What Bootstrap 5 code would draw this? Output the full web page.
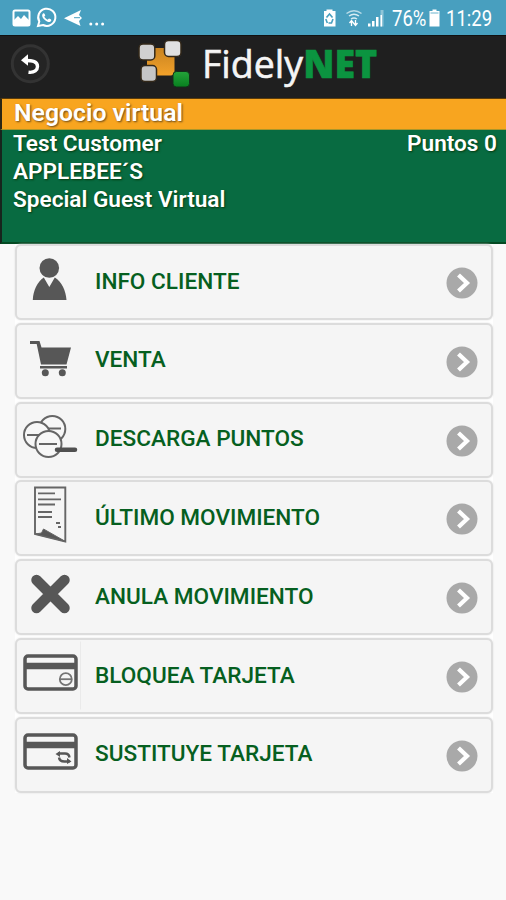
<!DOCTYPE html>
<html lang="es">
<head>
<meta charset="utf-8">
<meta name="viewport" content="width=device-width, initial-scale=1">
<title>FidelyNET</title>
<link href="https://cdn.jsdelivr.net/npm/bootstrap@5.3.0/dist/css/bootstrap.min.css" rel="stylesheet">
<style>
body{background:#f9f9f9;font-family:Roboto,"Liberation Sans",sans-serif;min-height:900px;overflow:hidden}
.status{height:35px;background:#489fbf;color:#fff;font-size:21.5px;line-height:35px}
.status svg,.topbar svg,.menu svg{display:block;flex:none}
.pct{width:35px;padding-top:1px;padding-left:1px}
.clock{width:52px;padding-top:1px}
.fit{display:inline-block;transform-origin:0 50%;white-space:nowrap}
.status .fit{transform:scaleX(.86)}
.brand .fit{transform:scaleX(.962);-webkit-text-stroke:.6px #f5f5f5}
.brand .fit b{-webkit-text-stroke:.6px #0b9440}
.topbar{height:63px;background:#1f1f1f;border-top:1px solid #111}
.brand{font-family:"Open Sans","Noto Sans",sans-serif;font-size:39px;line-height:53px;color:#f5f5f5;font-weight:500;white-space:nowrap}
.brand b{color:#0b9440;font-weight:800}
.shop{height:32px;background:#f8a51f;border-left:2px solid #2b2715;border-top:1px solid #5b3c0a;border-bottom:1px solid #a9962a;font-size:24.8px;line-height:28px;font-weight:600;color:#fff;text-shadow:1px 1px 2px #6b4a1a;padding-left:12px}
.customer{height:114px;background:#086b41;border-left:2px solid #17251d;border-bottom:2px solid #044a22;color:#fff;font-size:22.6px;line-height:28.100px;font-weight:600;text-shadow:1px 1px 2px #073c0f;padding:0 9px 0 11px}
.menu{width:478px;margin-left:15px;gap:2.8px;background:#fff}
.entry{height:76px;background:#f5f5f5;border:2px solid #dcdcdc;border-radius:6px;color:#065f20;font-size:22.6px;font-weight:500;text-decoration:none;box-shadow:0 0 2px #ddd}
.entry:hover{color:#065f20}
.entry .label{margin-left:8px;margin-top:-1px}
.entry .go{margin-right:13px;margin-top:2px}
</style>
</head>
<body>
<header>
<div class="status d-flex align-items-stretch">
<svg width="110" height="35" viewBox="0 0 110 35" aria-hidden="true"><rect x="13.500" y="10.500" width="16" height="15" rx="1.500" fill="none" stroke="#fff" stroke-width="2"/><path d="M14 20l4-4 3 3 3-4 5 5v5H14z" fill="#fff"/><path d="M38 26l1.300-4.500A8.600 8.600 0 1 1 43 25z" fill="none" stroke="#fff" stroke-width="2"/><path d="M43 13.500c-2 2 0 5 2.200 6.800 2.300 2 4.800 2.500 6 .5.500-1-.2-1.400-2.200-2.300l-1.500 1.300c-1.600-.7-2.700-1.900-3.200-3.200l1-1.200c-.8-1.900-1.300-2.800-2.300-1.900z" fill="#fff"/><path d="M64 18.300 81 10l-2 5 3 3-3 3 1.500 5z" fill="#fff"/><path d="M74 17.700h6" stroke="#489fbf" stroke-width="1"/><circle cx="90.800" cy="24" r="1.500" fill="#fff"/><circle cx="96.700" cy="24" r="1.500" fill="#fff"/><circle cx="102.600" cy="24" r="1.500" fill="#fff"/></svg>
<svg class="ms-auto" width="70" height="35" viewBox="321 0 70 35" aria-hidden="true"><path d="M324 11h2.500V9.500h6V11h3v15.500H324V11z" fill="#fff"/><path d="M326.500 17.500l3-3.500 3 3.500M333 19l-1.500 4h-3M325.800 19l1.500 4" fill="none" stroke="#489fbf" stroke-width="1.600"/><path d="M346.500 13.500q7.500-5.500 15 0" fill="none" stroke="#b9dce8" stroke-width="1.500"/><path d="M349 16q5-3.500 10 0M351 19q3-2 6 0" fill="none" stroke="#d8edf3" stroke-width="1.500"/><path d="M351.500 26v-5M349.500 23l2-2.500 2 2.500M355.500 20v5.500M353.500 23l2 2.500 2-2.500" fill="none" stroke="#fff" stroke-width="1.300"/><path d="M368 26.500v-3h2.500v3zM372 26.500v-5.500h2.500v5.500zM376 26.500v-9.500h2.500v9.500z" fill="#fff"/><path d="M380.500 26.500V10h3v16.500z" fill="#8fc5d8"/><path d="M380.500 26.500V15h1.500v11.500z" fill="#fff"/></svg>
<span class="pct"><span class="fit">76%</span></span>
<svg width="20" height="35" viewBox="426 0 20 35" aria-hidden="true"><path d="M429.500 11h3V9.500h4V11h3v15.500h-10z" fill="#fff"/><path d="M430.500 12h8v2h-8z" fill="#b4d9e6"/></svg>
<span class="clock me-2"><span class="fit">11:29</span></span>
</div>
<div class="topbar d-flex align-items-stretch">
<svg width="202" height="62" viewBox="0 36 202 62" role="img" aria-label="Volver"><defs><linearGradient id="gold" x2="0" y2="1"><stop stop-color="#c98421"/><stop offset="1" stop-color="#f2a12a"/></linearGradient><linearGradient id="green" x2="0" y2="1"><stop stop-color="#24a43a"/><stop offset="1" stop-color="#08801f"/></linearGradient></defs><circle cx="30.300" cy="63.800" r="18" fill="#242424" stroke="#333" stroke-width="3"/><path d="M28.500 72.300C34.500 73 37.500 70 37.500 66.500 37.500 61.500 33 60.500 25 60.500" fill="none" stroke="#fff" stroke-width="3.400"/><path d="M21 60.300l7-6v11.500z" fill="#fff"/><rect x="147" y="48" width="27.500" height="27.500" rx="4" fill="url(#gold)"/><g fill="#d0d0d0" stroke="#332819" stroke-width="1.500"><rect x="139" y="44" width="15.800" height="16" rx="4"/><rect x="164.500" y="40.500" width="16.500" height="16" rx="4" fill="#e0e0e0"/><rect x="141" y="65.500" width="15.500" height="16" rx="4" fill="#c5c5c5"/></g><rect x="173" y="71.500" width="16.500" height="15.500" rx="3.500" fill="url(#green)" stroke="#12301a"/></svg>
<div class="brand"><span class="fit">Fidely<b>NET</b></span></div>
</div>
</header>
<section>
<h1 class="shop mb-0">Negocio virtual</h1>
<div class="customer d-flex justify-content-between"><div><div>Test Customer</div><div>APPLEBEE´S</div><div>Special Guest Virtual</div></div><div>Puntos 0</div></div>
</section>
<nav class="menu d-flex flex-column">
<a class="entry d-flex align-items-center" href="#"><svg width="70" height="72" viewBox="17 246 70 72" fill="#575757"><circle cx="49.300" cy="268" r="9.800"/><path d="M32.800 300c.5-10 4.500-18 11-22.500l5.500 9.500 5.500-9.500c7 4.500 11 12.500 11.700 22.500z"/></svg><span class="label">INFO CLIENTE</span><svg class="go ms-auto" width="32" height="32" viewBox="0 0 32 32"><circle cx="16" cy="16" r="15.500" fill="#a9a9a9"/><path d="M12.500 8l8.500 8-8.500 8" fill="none" stroke="#fff" stroke-width="4.200"/></svg></a>
<a class="entry d-flex align-items-center" href="#"><svg width="70" height="72" viewBox="17 325 70 72" fill="#575757"><path d="M30 341h9.500l2 6.500h29.500l-4.500 17H41L36.700 344H30z"/><path d="M40 366h27v2.500H40z"/><circle cx="45.300" cy="372.800" r="3.500"/><circle cx="62.300" cy="372.800" r="3.500"/></svg><span class="label">VENTA</span><svg class="go ms-auto" width="32" height="32" viewBox="0 0 32 32"><circle cx="16" cy="16" r="15.500" fill="#a9a9a9"/><path d="M12.500 8l8.500 8-8.500 8" fill="none" stroke="#fff" stroke-width="4.200"/></svg></a>
<a class="entry d-flex align-items-center" href="#"><svg width="70" height="72" viewBox="17 404 70 72" fill="#f7f7f7" stroke="#666" stroke-width="2"><circle cx="52.300" cy="429" r="13"/><path d="M48 428.500h13"/><circle cx="37" cy="435" r="13"/><path d="M27 435h13"/><circle cx="48.500" cy="444" r="13"/><path d="M39 444h18"/><path d="M57 449.700h18" stroke="#505050" stroke-width="4.500" stroke-linecap="round"/></svg><span class="label">DESCARGA PUNTOS</span><svg class="go ms-auto" width="32" height="32" viewBox="0 0 32 32"><circle cx="16" cy="16" r="15.500" fill="#a9a9a9"/><path d="M12.500 8l8.500 8-8.500 8" fill="none" stroke="#fff" stroke-width="4.200"/></svg></a>
<a class="entry d-flex align-items-center" href="#"><svg width="70" height="72" viewBox="17 483 70 72" fill="none" stroke="#666" stroke-width="1.900"><path d="M35 488.500h30.300v54L35 535z"/><path d="M38 494.300h17M38 500.300h23M38 505.500h17M38 513h14M38 518h14" stroke-width="1.800"/><path d="M56 524h4M58 528h3" stroke-width="2"/><path d="M35 535l6.500-1 2-4 22 12.500z" fill="#575757" stroke-width="1"/></svg><span class="label">ÚLTIMO MOVIMIENTO</span><svg class="go ms-auto" width="32" height="32" viewBox="0 0 32 32"><circle cx="16" cy="16" r="15.500" fill="#a9a9a9"/><path d="M12.500 8l8.500 8-8.500 8" fill="none" stroke="#fff" stroke-width="4.200"/></svg></a>
<a class="entry d-flex align-items-center" href="#"><svg width="70" height="72" viewBox="17 561.500 70 72"><path d="M36.500 580.500l28 28M64.500 580.500l-28 28" stroke="#575757" stroke-width="10.500" stroke-linecap="round"/></svg><span class="label">ANULA MOVIMIENTO</span><svg class="go ms-auto" width="32" height="32" viewBox="0 0 32 32"><circle cx="16" cy="16" r="15.500" fill="#a9a9a9"/><path d="M12.500 8l8.500 8-8.500 8" fill="none" stroke="#fff" stroke-width="4.200"/></svg></a>
<a class="entry d-flex align-items-center" href="#"><svg width="70" height="72" viewBox="17 640.500 70 72" fill="none" stroke="#575757"><path d="M80.500 642v68" stroke="#eaeaea"/><rect x="25" y="656.500" width="51" height="33" rx="3" stroke-width="3.500"/><path d="M25 666.500h51" stroke-width="6.500"/><circle cx="65.800" cy="679.700" r="6" stroke="#747474" stroke-width="1.800"/><path d="M60 679.700h11.600" stroke="#747474" stroke-width="1.800"/></svg><span class="label">BLOQUEA TARJETA</span><svg class="go ms-auto" width="32" height="32" viewBox="0 0 32 32"><circle cx="16" cy="16" r="15.500" fill="#a9a9a9"/><path d="M12.500 8l8.500 8-8.500 8" fill="none" stroke="#fff" stroke-width="4.200"/></svg></a>
<a class="entry d-flex align-items-center" href="#"><svg width="70" height="72" viewBox="17 719 70 72" fill="none" stroke="#575757"><rect x="25" y="735" width="51" height="33" rx="3" stroke-width="3.500"/><path d="M25 745h51" stroke-width="6.500"/><path d="M58 753.500h7q4 0 4.500 4M69.500 761.500h-5q-5 0-5.500-4" stroke-width="2.400"/><path d="M55.500 754l4.500-3v6zM71.500 761.500l-4.500-3.500v6z" fill="#575757" stroke="none"/></svg><span class="label">SUSTITUYE TARJETA</span><svg class="go ms-auto" width="32" height="32" viewBox="0 0 32 32"><circle cx="16" cy="16" r="15.500" fill="#a9a9a9"/><path d="M12.500 8l8.500 8-8.500 8" fill="none" stroke="#fff" stroke-width="4.200"/></svg></a>
</nav>
<script src="https://cdn.jsdelivr.net/npm/bootstrap@5.3.0/dist/js/bootstrap.bundle.min.js"></script>
</body>
</html>
